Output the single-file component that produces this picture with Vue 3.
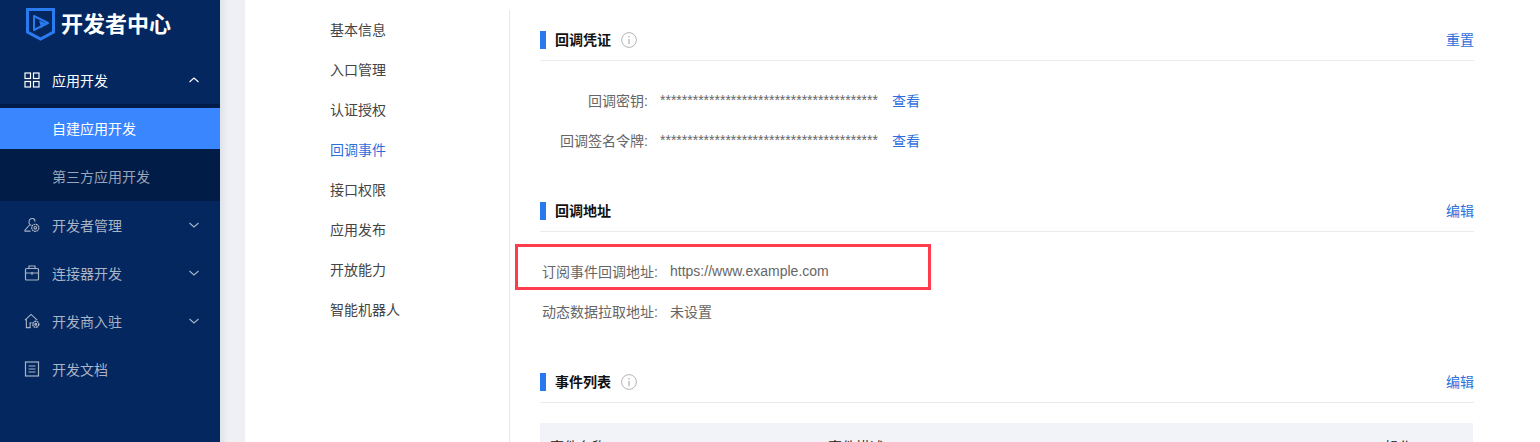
<script setup>
const subNav = ['基本信息', '入口管理', '认证授权', '回调事件', '接口权限', '应用发布', '开放能力', '智能机器人']
</script>

<template>
  <div class="page">
    <aside class="sidebar">
      <div class="logo">
        <svg class="logo-mark" width="30" height="33" viewBox="0 0 30 33" fill="none">
          <path d="M1.5 1.5H27.5V24L14.5 31L1.5 24Z" stroke="#2b7bf0" stroke-width="3" />
          <path d="M8 8L22 15L8 22Z" stroke="#2b7bf0" stroke-width="2" stroke-linejoin="round" />
          <path d="M13 12.5L20 15.5L16.5 17L15.5 20.5Z" fill="#2b7bf0" />
        </svg>
        <span class="logo-text">开发者中心</span>
      </div>

      <div class="menu-row open">
        <svg class="mi" width="16" height="16" viewBox="0 0 16 16" fill="none" stroke="currentColor" stroke-width="1.2">
          <rect x="1" y="1" width="5.5" height="5.5" />
          <rect x="9.5" y="1" width="5.5" height="5.5" />
          <rect x="1" y="9.5" width="5.5" height="5.5" />
          <rect x="9.5" y="9.5" width="5.5" height="5.5" />
        </svg>
        <span class="ml">应用开发</span>
        <svg class="chev" width="12" height="8" viewBox="0 0 12 8" fill="none" stroke="currentColor" stroke-width="1.1"><path d="M1.5 6L6 2L10.5 6" /></svg>
      </div>
      <div class="submenu">
        <div class="sub active">自建应用开发</div>
        <div class="sub">第三方应用开发</div>
      </div>

      <div class="menu-row">
        <svg class="mi" width="17" height="16" viewBox="0 0 17 16" fill="none" stroke="currentColor" stroke-width="1.1">
          <path d="M8 8.5C5.5 7.5 5 5.5 5.5 3.5C6 1.5 8 .8 9.5 1.2C11 1.6 11.8 3 11.5 4.5" />
          <path d="M5.8 8L1 13.5V14.5H7" />
          <circle cx="12" cy="11" r="3.8" stroke-width="1.3" stroke-dasharray="2 .6" />
          <circle cx="12" cy="11" r="1.4" />
        </svg>
        <span class="ml">开发者管理</span>
        <svg class="chev" width="12" height="8" viewBox="0 0 12 8" fill="none" stroke="currentColor" stroke-width="1.1"><path d="M1.5 2L6 6L10.5 2" /></svg>
      </div>
      <div class="menu-row">
        <svg class="mi" width="16" height="16" viewBox="0 0 16 16" fill="none" stroke="currentColor" stroke-width="1.2">
          <rect x="1.5" y="3.5" width="13" height="11.5" rx="1" />
          <path d="M5 3.5V1H11V3.5M1.5 8H14.5M8 7V10" />
        </svg>
        <span class="ml">连接器开发</span>
        <svg class="chev" width="12" height="8" viewBox="0 0 12 8" fill="none" stroke="currentColor" stroke-width="1.1"><path d="M1.5 2L6 6L10.5 2" /></svg>
      </div>
      <div class="menu-row">
        <svg class="mi" width="17" height="16" viewBox="0 0 17 16" fill="none" stroke="currentColor" stroke-width="1.2">
          <path d="M1 7L7.5 1L14 7M2.5 6V15H6.5V10H8" />
          <circle cx="12.5" cy="11.5" r="3.2" stroke-width="1.5" stroke-dasharray="2 .6" />
          <circle cx="12.5" cy="11.5" r="1" fill="currentColor" />
        </svg>
        <span class="ml">开发商入驻</span>
        <svg class="chev" width="12" height="8" viewBox="0 0 12 8" fill="none" stroke="currentColor" stroke-width="1.1"><path d="M1.5 2L6 6L10.5 2" /></svg>
      </div>
      <div class="menu-row">
        <svg class="mi" width="16" height="16" viewBox="0 0 16 16" fill="none" stroke="currentColor" stroke-width="1.2">
          <rect x="1.5" y="1" width="13" height="14" />
          <path d="M4.5 5H11.5M4.5 8H11.5M4.5 11H11.5" />
        </svg>
        <span class="ml">开发文档</span>
      </div>
    </aside>

    <div class="gutter"></div>

    <main class="main">
      <nav class="subnav">
        <div v-for="item in subNav" :key="item" class="subnav-item" :class="{ current: item === '回调事件' }">{{ item }}</div>
      </nav>

      <div class="content">
        <section class="sec first">
          <header class="sec-head">
            <i class="bar"></i>
            <span class="sec-title">回调凭证</span>
            <svg class="info" width="16" height="16" viewBox="0 0 16 16" fill="none" stroke="#b5b5b5"><circle cx="8" cy="8" r="7.4" /><path d="M8 7V12.2M8 4V5.4" stroke-width="1.3" /></svg>
            <a class="link head-link">重置</a>
          </header>
          <div class="rows">
            <div class="row"><span class="label l1">回调密钥:</span><span class="secret">****************************************</span><a class="link see">查看</a></div>
            <div class="row"><span class="label l1">回调签名令牌:</span><span class="secret">****************************************</span><a class="link see">查看</a></div>
          </div>
        </section>

        <section class="sec">
          <header class="sec-head">
            <i class="bar"></i>
            <span class="sec-title">回调地址</span>
            <a class="link head-link">编辑</a>
          </header>
          <div class="rows">
            <div class="row"><span class="label l2">订阅事件回调地址:</span><span class="val">https://www.example.com</span></div>
            <div class="row"><span class="label l2">动态数据拉取地址:</span><span class="val">未设置</span></div>
          </div>
        </section>

        <section class="sec">
          <header class="sec-head">
            <i class="bar"></i>
            <span class="sec-title">事件列表</span>
            <svg class="info" width="16" height="16" viewBox="0 0 16 16" fill="none" stroke="#b5b5b5"><circle cx="8" cy="8" r="7.4" /><path d="M8 7V12.2M8 4V5.4" stroke-width="1.3" /></svg>
            <a class="link head-link">编辑</a>
          </header>
          <div class="thead">
            <span class="th c1">事件名称</span>
            <span class="th c2">事件描述</span>
            <span class="th c3">操作</span>
          </div>
        </section>
      </div>

      <div class="highlight"></div>
    </main>
  </div>
</template>

<style>
html, body { margin: 0; height: 100%; overflow: hidden; background: #fff; }
</style>

<style scoped>
.page {
  display: flex;
  width: 1540px;
  height: 442px;
  overflow: hidden;
  font-family: "Liberation Sans", "Noto Sans CJK SC", sans-serif;
  font-size: 14px;
}
.sidebar {
  width: 220px;
  flex: none;
  background: #03275e;
  color: #a9b4c6;
}
.logo {
  display: flex;
  align-items: center;
  height: 56px;
  padding: 0 0 8px 26px;
  box-sizing: border-box;
}
.logo-mark { flex: none; }
.logo-text {
  margin-left: 5px;
  margin-top: -5px;
  font-size: 22px;
  font-weight: 700;
  color: #fff;
  white-space: nowrap;
}
.menu-row {
  display: flex;
  align-items: center;
  height: 48px;
  padding-left: 24px;
  padding-right: 20px;
  box-sizing: border-box;
}
.menu-row.open { color: #fff; }
.mi { flex: none; width: 16px; }
.ml { margin-left: 12px; }
.chev { margin-left: auto; flex: none; }
.submenu {
  background: #021c48;
  padding-top: 4px;
  height: 97px;
  box-sizing: border-box;
}
.sub {
  height: 41px;
  line-height: 43px;
  padding-left: 52px;
  color: #98a4b8;
}
.sub + .sub { margin-top: 7px; }
.sub.active {
  background: #3a86ff;
  color: #fff;
}
.gutter {
  width: 25px;
  flex: none;
  background: linear-gradient(90deg, #dfe3ea 0, #eef0f4 8px, #eff0f4 100%);
}
.main {
  flex: 1;
  display: flex;
  position: relative;
  background: #fff;
}
.subnav {
  width: 265px;
  flex: none;
  box-sizing: border-box;
  margin-top: 10px;
  padding-left: 85px;
  border-right: 1px solid #e8e8e8;
}
.subnav-item {
  height: 40px;
  line-height: 40px;
  color: #444;
}
.subnav-item.current { color: #2d6fdc; }
.content {
  width: 934px;
  margin-left: 30px;
  flex: none;
}
.sec { padding-top: 40px; }
.sec.first { padding-top: 30px; }
.sec-head {
  display: flex;
  align-items: center;
  height: 20px;
  padding-bottom: 10px;
  border-bottom: 1px solid #ebebeb;
}
.bar {
  width: 6px;
  height: 18px;
  background: #2878ee;
  margin-right: 9px;
}
.sec-title {
  font-weight: 700;
  color: #111;
  margin-top: -2px;
}
.info { margin-left: 10px; }
.link { color: #2d6fdc; }
.head-link { margin-left: auto; margin-top: -2px; }
.rows { padding-top: 20px; }
.row {
  display: flex;
  align-items: center;
  height: 40px;
  color: #666;
}
.row > * { margin-top: -2px; }
.label { text-align: right; flex: none; }
.l1 { width: 108px; margin-right: 12px; }
.l2 { width: 118px; margin-right: 12px; }
.secret { width: 232px; flex: none; white-space: nowrap; overflow: hidden; }
.val { color: #666; }
.thead {
  display: flex;
  margin-top: 20px;
  height: 60px;
  background: #f2f3f8;
  line-height: 48px;
  width: 933px;
}
.th { color: #222; }
.c1 { margin-left: 10px; width: 278px; }
.c2 { width: 557px; }
.highlight {
  position: absolute;
  left: 270px;
  top: 244px;
  width: 416px;
  height: 46px;
  box-sizing: border-box;
  border: 3px solid #ff3b4e;
}
</style>
